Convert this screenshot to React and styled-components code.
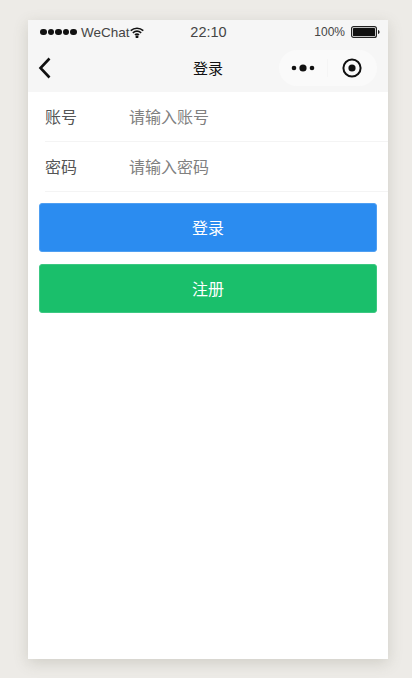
import React from "react";
import styled, { createGlobalStyle } from "styled-components";

const GlobalStyle = createGlobalStyle`
  html, body {
    margin: 0;
    height: 100%;
    background: #edebe7;
    overflow: hidden;
  }
  body {
    font-family: "Liberation Sans", "Noto Sans CJK SC", sans-serif;
  }
`

const Stage = styled.div`
  height: 678px;
  padding: 20px 24px 0 28px;
  box-sizing: border-box;
`

const Phone = styled.div`
  width: 360px;
  height: 639px;
  background: #fff;
  box-shadow: 0 4px 14px rgba(90, 90, 70, 0.2);
`

const Header = styled.header`
  background: #f6f6f6;
  height: 72px;
`

const StatusBar = styled.div`
  height: 24px;
  display: grid;
  grid-template-columns: 1fr auto 1fr;
  align-items: center;
  padding: 0 8px 0 12px;
  color: #333;
`

const Carrier = styled.div`
  display: flex;
  align-items: center;
  font-size: 13.5px;
  color: #444;
`

const Dots = styled.span`
  display: flex;
  gap: 1px;
  margin-right: 4px;
`

const Dot = styled.i`
  width: 6.6px;
  height: 6.6px;
  border-radius: 50%;
  background: #111;
`

const Clock = styled.div`
  font-size: 14.5px;
  color: #444;
  margin: 0 3px 1px 0;
`

const Battery = styled.div`
  display: flex;
  align-items: center;
  justify-content: flex-end;
  gap: 6px;
  font-size: 12px;
  color: #444;
`

const NavBar = styled.div`
  height: 48px;
  display: flex;
  align-items: center;
  position: relative;
  padding: 0 11px 0 10px;
`

const Title = styled.div`
  position: absolute;
  left: 0;
  right: 0;
  padding-bottom: 2px;
  text-align: center;
  font-size: 15px;
  color: #111;
`

const Capsule = styled.div`
  margin-left: auto;
  width: 98px;
  height: 36px;
  padding-right: 2px;
  box-sizing: border-box;
  border-radius: 18px;
  background: #fafafa;
  display: grid;
  grid-template-columns: 1fr 1fr;
  align-items: center;
  justify-items: center;
  position: relative;
  z-index: 1;
`

const CapsuleCell = styled.span`
  display: flex;
  align-items: center;
  justify-content: center;
  width: 100%;
  height: 18px;
  border-left: ${({ $divided }) => ($divided ? "1px solid #f5f5f5" : "0")};
  box-sizing: border-box;
`

const Field = styled.label`
  height: 50px;
  padding-bottom: 1px;
  box-sizing: border-box;
  margin-left: 17px;
  display: flex;
  align-items: center;
  border-bottom: 1px solid #f4f4f4;
  font-size: 16px;
`

const FieldName = styled.span`
  width: 84px;
  color: #555;
`

const Placeholder = styled.span`
  color: #808080;
`

const Actions = styled.div`
  display: flex;
  flex-direction: column;
  gap: 12px;
  padding: 11px 11px 0;
`

const Button = styled.button`
  height: 49px;
  padding: 0 0 2px;
  border: 1px solid ${({ $edge }) => $edge};
  border-radius: 3px;
  background: ${({ $tone }) => $tone};
  color: #fff;
  font: inherit;
  font-size: 16px;
`

const BackIcon = () => (
  <svg width="14" height="22" viewBox="0 0 14 22" fill="none">
    <path d="M11.5 1.5 2.5 11l9 9.5" stroke="#111" strokeWidth="2.6" />
  </svg>
)

const WifiIcon = () => (
  <svg width="14" height="11" viewBox="0 0 14 11" fill="none" stroke="#111" strokeWidth="1.6">
    <path d="M.7 3.6C4.4.4 9.6.4 13.3 3.6M2.8 5.8c2.5-2 5.9-2 8.4 0M4.9 7.9c1.3-1 2.9-1 4.2 0" />
    <circle cx="7" cy="9.8" r=".7" fill="#111" />
  </svg>
)

const BatteryIcon = () => (
  <svg width="29" height="12" viewBox="0 0 29 12">
    <rect x=".6" y=".6" width="24.8" height="10.8" rx="2" fill="none" stroke="#222" strokeWidth="1.2" />
    <rect x="2" y="2" width="22" height="8" rx=".6" fill="#111" />
    <path d="M27 4c1 .2 1.6 1 1.6 2s-.6 1.8-1.6 2z" fill="#222" />
  </svg>
)

const MoreIcon = () => (
  <svg width="24" height="10" viewBox="0 0 24 10" fill="#111">
    <circle cx="3" cy="5" r="2.3" />
    <circle cx="12" cy="5" r="3.6" />
    <circle cx="21" cy="5" r="2.3" />
  </svg>
)

const TargetIcon = () => (
  <svg width="20" height="20" viewBox="0 0 20 20">
    <circle cx="10" cy="10" r="8.6" fill="none" stroke="#111" strokeWidth="2" />
    <circle cx="10" cy="10" r="3.6" fill="#111" />
  </svg>
)

export default function App() {
  return (
    <Stage>
      <GlobalStyle />
      <Phone>
        <Header>
          <StatusBar>
            <Carrier>
              <Dots>
                {[0, 1, 2, 3, 4].map((idx) => <Dot key={idx} />)}
              </Dots>
              WeChat
              <WifiIcon />
            </Carrier>
            <Clock>22:10</Clock>
            <Battery>
              100%
              <BatteryIcon />
            </Battery>
          </StatusBar>
          <NavBar>
            <BackIcon />
            <Title>登录</Title>
            <Capsule>
              <CapsuleCell><MoreIcon /></CapsuleCell>
              <CapsuleCell $divided><TargetIcon /></CapsuleCell>
            </Capsule>
          </NavBar>
        </Header>
        <Field>
          <FieldName>账号</FieldName>
          <Placeholder>请输入账号</Placeholder>
        </Field>
        <Field>
          <FieldName>密码</FieldName>
          <Placeholder>请输入密码</Placeholder>
        </Field>
        <Actions>
          <Button $tone="#2b8cf0" $edge="#4f9ff2">登录</Button>
          <Button $tone="#1abf6b" $edge="#3cc882">注册</Button>
        </Actions>
      </Phone>
    </Stage>
  );
}
